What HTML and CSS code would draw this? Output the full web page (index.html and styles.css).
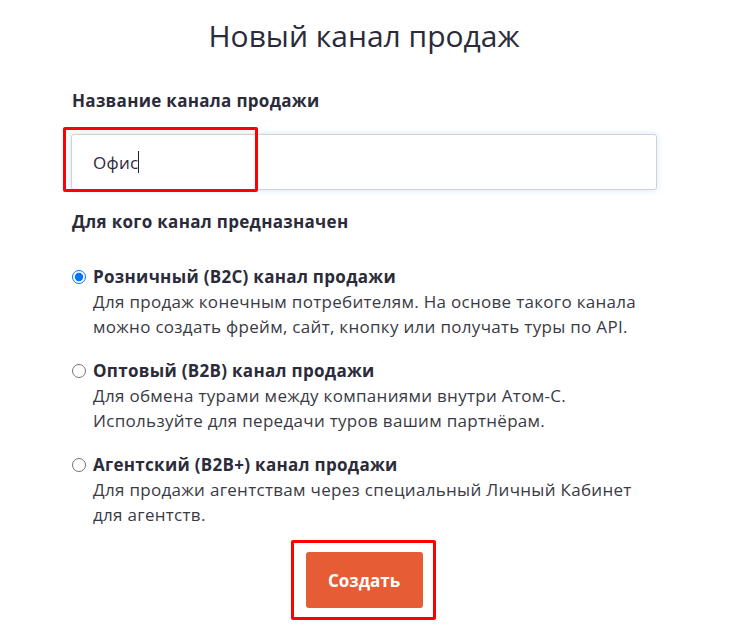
FILE: index.html
```html
<!DOCTYPE html>
<html>

<head>
    <title>Новый канал продаж</title>
    <link rel="stylesheet" href="styles.css">
</head>

<body>
    <!-- New sales channel form -->
    <div class="container">
        <h1 class="title">Новый канал продаж</h1>

        <form class="channel-form">
            <label class="field-label" for="channel-name">Название канала продажи</label>
            <div class="field">
                <input type="text" id="channel-name" class="text-input" value="Офис">
                <span class="caret"></span>
                <span class="mark mark-input"></span>
            </div>

            <p class="field-label">Для кого канал предназначен</p>

            <div class="options">
                <label class="option">
                    <input type="radio" name="audience" value="b2c" checked>
                    <span class="option-body">
                        <span class="option-title">Розничный (B2C) канал продажи</span>
                        <span class="option-text">Для продаж конечным потребителям. На основе такого канала можно создать фрейм, сайт, кнопку или получать туры по API.</span>
                    </span>
                </label>
                <label class="option">
                    <input type="radio" name="audience" value="b2b">
                    <span class="option-body">
                        <span class="option-title">Оптовый (B2B) канал продажи</span>
                        <span class="option-text">Для обмена турами между компаниями внутри Атом-С. Используйте для передачи туров вашим партнёрам.</span>
                    </span>
                </label>
                <label class="option">
                    <input type="radio" name="audience" value="b2b-plus">
                    <span class="option-body">
                        <span class="option-title">Агентский (B2B+) канал продажи</span>
                        <span class="option-text">Для продажи агентствам через специальный Личный Кабинет для агентств.</span>
                    </span>
                </label>
            </div>

            <div class="actions">
                <div class="submit-wrap">
                    <button type="button" class="submit-btn">Создать</button>
                    <span class="mark mark-button"></span>
                </div>
            </div>
        </form>
    </div>

</body>

</html>
```

FILE: styles.css
```css
body {
    font-family: "Open Sans", "Noto Sans", sans-serif;
    background-color: #ffffff;
    color: #33333d;
    margin: 0;
    padding: 0;
}

.container {
    width: 586px;
    margin-left: 71px;
    padding-top: 16px;
    padding-bottom: 40px;
}

.title {
    margin: 0;
    text-align: center;
    font-size: 30px;
    font-weight: 400;
    line-height: 40px;
    color: #2b2b3a;
}

.field-label {
    display: block;
    margin: 0;
    padding-left: 1px;
    font-size: 17px;
    font-weight: 700;
    line-height: 24px;
    letter-spacing: 0.3px;
    color: #2b2b3a;
}

.channel-form > .field-label:first-child {
    margin-top: 33px;
}

.field {
    position: relative;
    margin-top: 21px;
    margin-bottom: 20px;
}

.text-input {
    box-sizing: border-box;
    width: 586px;
    height: 56px;
    padding: 0 21px;
    border: 1px solid #cfd3d8;
    border-radius: 3px;
    box-shadow: 0 0 6px rgba(120, 180, 235, 0.35);
    font-family: inherit;
    font-size: 17px;
    letter-spacing: 0.3px;
    color: #2b2b3a;
    outline: none;
}

.caret {
    position: absolute;
    left: 67px;
    top: 17px;
    width: 1px;
    height: 22px;
    background-color: #1f1f2a;
}

/* red highlight frames drawn over the controls */
.mark {
    position: absolute;
    border: 3px solid #ff0000;
    border-radius: 2px;
    pointer-events: none;
}

.mark-input {
    left: -8px;
    top: -7px;
    width: 189px;
    height: 59px;
}

.options {
    margin-top: 30px;
}

.option {
    display: flex;
    align-items: flex-start;
    gap: 7px;
    margin-bottom: 19px;
    cursor: pointer;
}

.option input {
    margin: 6px 0 0 1px;
    width: 14px;
    height: 14px;
    flex-shrink: 0;
}

.option-body {
    display: flex;
    flex-direction: column;
    width: 560px;
}

.option-title {
    font-size: 17px;
    font-weight: 700;
    line-height: 25px;
    letter-spacing: 0.3px;
    color: #2b2b3a;
}

.option-text {
    font-size: 17px;
    line-height: 25px;
    letter-spacing: 0.3px;
    color: #3a3a44;
}

.actions {
    display: flex;
    justify-content: center;
    margin-top: 25px;
}

.submit-wrap {
    position: relative;
}

.submit-btn {
    width: 117px;
    height: 56px;
    border: none;
    border-radius: 3px;
    background-color: #e65c35;
    color: #ffffff;
    font-family: inherit;
    font-size: 17px;
    font-weight: 700;
    cursor: pointer;
}

.mark-button {
    left: -15px;
    top: -12px;
    width: 139px;
    height: 74px;
}
```
